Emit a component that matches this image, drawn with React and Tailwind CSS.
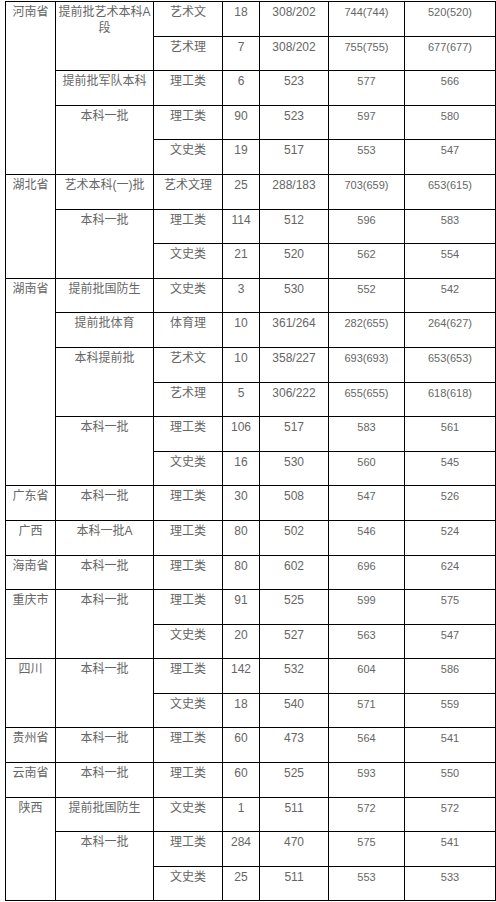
import React from 'react';

// [province, provinceSpan, batch, batchSpan, category, count, score, high, low]
const rows = [
  ['河南省', 5, '提前批艺术本科A段', 2, '艺术文', '18', '308/202', '744(744)', '520(520)'],
  [null, 0, null, 0, '艺术理', '7', '308/202', '755(755)', '677(677)'],
  [null, 0, '提前批军队本科', 1, '理工类', '6', '523', '577', '566'],
  [null, 0, '本科一批', 2, '理工类', '90', '523', '597', '580'],
  [null, 0, null, 0, '文史类', '19', '517', '553', '547'],
  ['湖北省', 3, '艺术本科(一)批', 1, '艺术文理', '25', '288/183', '703(659)', '653(615)'],
  [null, 0, '本科一批', 2, '理工类', '114', '512', '596', '583'],
  [null, 0, null, 0, '文史类', '21', '520', '562', '554'],
  ['湖南省', 6, '提前批国防生', 1, '文史类', '3', '530', '552', '542'],
  [null, 0, '提前批体育', 1, '体育理', '10', '361/264', '282(655)', '264(627)'],
  [null, 0, '本科提前批', 2, '艺术文', '10', '358/227', '693(693)', '653(653)'],
  [null, 0, null, 0, '艺术理', '5', '306/222', '655(655)', '618(618)'],
  [null, 0, '本科一批', 2, '理工类', '106', '517', '583', '561'],
  [null, 0, null, 0, '文史类', '16', '530', '560', '545'],
  ['广东省', 1, '本科一批', 1, '理工类', '30', '508', '547', '526'],
  ['广西', 1, '本科一批A', 1, '理工类', '80', '502', '546', '524'],
  ['海南省', 1, '本科一批', 1, '理工类', '80', '602', '696', '624'],
  ['重庆市', 2, '本科一批', 2, '理工类', '91', '525', '599', '575'],
  [null, 0, null, 0, '文史类', '20', '527', '563', '547'],
  ['四川', 2, '本科一批', 2, '理工类', '142', '532', '604', '586'],
  [null, 0, null, 0, '文史类', '18', '540', '571', '559'],
  ['贵州省', 1, '本科一批', 1, '理工类', '60', '473', '564', '541'],
  ['云南省', 1, '本科一批', 1, '理工类', '60', '525', '593', '550'],
  ['陕西', 3, '提前批国防生', 1, '文史类', '1', '511', '572', '572'],
  [null, 0, '本科一批', 2, '理工类', '284', '470', '575', '541'],
  [null, 0, null, 0, '文史类', '25', '511', '553', '533'],
];

const cell = 'border border-black align-top text-center px-0 pt-[2px] text-[12px] leading-[16px]';
const small = 'border border-black align-top text-center px-0 pt-[3px] text-[11px] leading-[14px]';

export default function App() {
  return (
    <div className="bg-white w-[496px] h-[902px] pl-[5px] pt-px text-[#666] font-['Liberation_Sans','Noto_Sans_CJK_SC',sans-serif]">
      <table className="table-fixed border-collapse w-[490px]">
        <colgroup>
          <col className="w-[50px]" />
          <col className="w-[98px]" />
          <col className="w-[69px]" />
          <col className="w-[37px]" />
          <col className="w-[69px]" />
          <col className="w-[76px]" />
          <col className="w-[91px]" />
        </colgroup>
        <tbody>
          {rows.map((r, i) => (
            <tr key={i} className="h-[34.6px]">
              {r[0] && <td rowSpan={r[1]} className={cell}>{r[0]}</td>}
              {r[2] && <td rowSpan={r[3]} className={cell}>{r[2]}</td>}
              <td className={cell}>{r[4]}</td>
              <td className={cell}>{r[5]}</td>
              <td className={cell}>{r[6]}</td>
              <td className={small}>{r[7]}</td>
              <td className={small}>{r[8]}</td>
            </tr>
          ))}
        </tbody>
      </table>
    </div>
  );
}
